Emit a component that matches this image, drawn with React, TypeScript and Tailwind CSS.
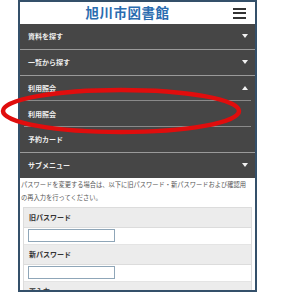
import React from 'react';

const font = { fontFamily: '"Noto Sans CJK JP", "Noto Sans", sans-serif' };

const Caret = ({ up }: { up?: boolean }) => (
  <svg width="6" height="4" viewBox="0 0 6 4" className="mr-[7px]">
    <path d={up ? 'M0 4 L3 0 L6 4 Z' : 'M0 0 L6 0 L3 4 Z'} fill="#f2f2f2" />
  </svg>
);

const menu = [
  { label: '資料を探す', caret: 'down', line: 'full' },
  { label: '一覧から探す', caret: 'down', line: 'full' },
  { label: '利用照会', caret: 'up', line: 'inset' },
  { label: '利用照会', caret: '', line: 'inset' },
  { label: '予約カード', caret: '', line: 'full' },
  { label: 'サブメニュー', caret: 'down', line: '' },
];

const App: React.FC = () => {
  return (
    <div className="relative w-[282px] h-[300px] bg-white overflow-hidden" style={font}>
      <div className="ml-[18px] w-[239px] h-[292px] border-2 border-[#34506a] overflow-hidden bg-white">
        <div className="h-[22px] flex items-center">
          <div className="flex-1 text-center pl-[2px] text-[13.5px] font-bold text-[#2a6cb0] tracking-[0.5px] leading-none">
            旭川市図書館
          </div>
          <div className="w-[13px] mr-[9px] flex flex-col gap-[2.5px]">
            <div className="h-[2px] bg-[#333]" />
            <div className="h-[2px] bg-[#333]" />
            <div className="h-[2px] bg-[#333]" />
          </div>
        </div>
        <div className="bg-[#464646]">
          {menu.map((m, i) => (
            <div key={i}>
              <div className="h-[24.8px] flex items-center justify-between pl-[8px]">
                <span className="text-[7px] text-[#eee] font-bold">{m.label}</span>
                {m.caret && <Caret up={m.caret === 'up'} />}
              </div>
              {m.line === 'full' && <div className="h-[1px] bg-[#9a9a9a]" />}
              {m.line === 'inset' && <div className="h-[1px] bg-[#8a8a8a] mx-[4px]" />}
            </div>
          ))}
        </div>
        <p className="text-[6.25px] leading-[13px] text-[#555] px-[1px] whitespace-nowrap">
          パスワードを変更する場合は、以下に旧パスワード・新パスワードおよび確認用
          <br />
          の再入力を行ってください。
        </p>
        <div className="mx-[3px] mt-[3px] border border-[#dcdcdc]">
          {['旧パスワード', '新パスワード', '再入力'].map((l, i) => (
            <div key={i}>
              <div className="h-[20px] bg-[#ececec] flex items-center pl-[5px] border-b border-[#dcdcdc]">
                <span className="text-[7px] font-bold text-[#333]">{l}</span>
              </div>
              <div className="h-[17px] bg-white flex items-center pl-[4px] border-b border-[#e4e4e4]">
                <div className="w-[87px] h-[13px] border border-[#8fa6b8] bg-white" />
              </div>
            </div>
          ))}
        </div>
      </div>
      <svg className="absolute left-0 top-0 pointer-events-none" width="282" height="300">
        <ellipse cx="121" cy="111" rx="118" ry="21" fill="none" stroke="#e00d0d" strokeWidth="4.5" />
      </svg>
    </div>
  );
};

export default App;
